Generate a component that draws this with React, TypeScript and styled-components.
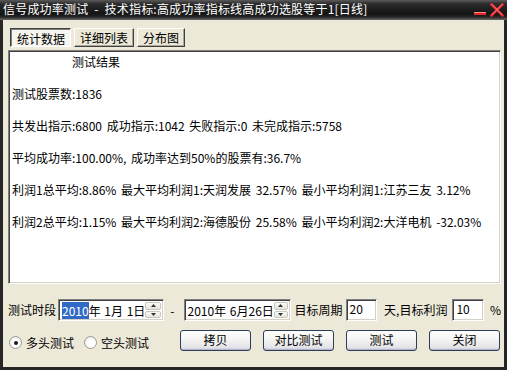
import React from "react";
import styled, { createGlobalStyle } from "styled-components";

const GlobalStyle = createGlobalStyle`
    html, body {
        margin: 0;
        padding: 0;
        background: #1c1c1c;
    }
    body {
        font-family: "Noto Sans CJK SC", "Liberation Sans", sans-serif;
        font-size: 12px;
        word-spacing: 2px;
    }
`;

const lines: (string | null)[] = [
    null,
    "测试股票数:1836",
    null,
    "共发出指示:6800 成功指示:1042 失败指示:0 未完成指示:5758",
    null,
    "平均成功率:100.00%, 成功率达到50%的股票有:36.7%",
    null,
    "利润1总平均:8.86% 最大平均利润1:天润发展 32.57% 最小平均利润1:江苏三友 3.12%",
    null,
    "利润2总平均:1.15% 最大平均利润2:海德股份 25.58% 最小平均利润2:大洋电机 -32.03%",
];

const SpinArrows = () => (
    <Spin>
        <SpinHalf>
            <svg width="5" height="3" viewBox="0 0 5 3"><path d="M2.5 0 L5 3 L0 3 Z" fill="#333" /></svg>
        </SpinHalf>
        <SpinHalf>
            <svg width="5" height="3" viewBox="0 0 5 3"><path d="M0 0 L5 0 L2.5 3 Z" fill="#333" /></svg>
        </SpinHalf>
    </Spin>
);

const App = () => {
    return (
        <>
            <GlobalStyle />
            <Window>
                <TitleBar>
                    <Title>信号成功率测试 - 技术指标:高成功率指标线高成功选股等于1[日线]</Title>
                    <WinControls>
                        <svg width="31" height="16" viewBox="0 0 31 16">
                            <rect x="0" y="11" width="12" height="3" fill="#e3242b" />
                            <rect x="0" y="11" width="12" height="1" fill="#ff8a8a" />
                            <path d="M17.5 3.5 L28.5 14.5 M28.5 3.5 L17.5 14.5" stroke="#e3242b" strokeWidth="2.6" strokeLinecap="square" />
                            <path d="M17.5 3 L28.5 14 M28.5 3 L17.5 14" stroke="#ff9a9a" strokeWidth="0.8" />
                        </svg>
                    </WinControls>
                </TitleBar>
                <Body>
                    <Tabs>
                        <Tab $active>统计数据</Tab>
                        <Tab>详细列表</Tab>
                        <Tab>分布图</Tab>
                    </Tabs>
                    <Report>
                        <Line $indent>测试结果</Line>
                        {lines.map((l, i) => (
                            <Line key={i}>{l ?? "\u00a0"}</Line>
                        ))}
                    </Report>
                    <ParamRow>
                        <Label>测试时段</Label>
                        <DateBox $w={109}>
                            <DateText>
                                <Selected>2010</Selected>年 1月 1日
                            </DateText>
                            <SpinArrows />
                        </DateBox>
                        <Dash>-</Dash>
                        <DateBox $w={107}>
                            <DateText>2010年 6月26日</DateText>
                            <SpinArrows />
                        </DateBox>
                        <Label $ml={4}>目标周期</Label>
                        <NumInput $ml={3}>20</NumInput>
                        <Label $ml={7}>天,目标利润</Label>
                        <NumInput $ml={5}>10</NumInput>
                        <Label $ml={6}>%</Label>
                    </ParamRow>
                    <ActionRow>
                        <RadioGroup>
                            <Radio>
                                <RadioDot $checked />
                                多头测试
                            </Radio>
                            <Radio>
                                <RadioDot />
                                空头测试
                            </Radio>
                        </RadioGroup>
                        <Buttons>
                            <Button>拷贝</Button>
                            <Button>对比测试</Button>
                            <Button>测试</Button>
                            <Button>关闭</Button>
                        </Buttons>
                    </ActionRow>
                </Body>
            </Window>
        </>
    );
};

export default App;

const Window = styled.div`
    width: 507px;
    height: 370px;
    display: flex;
    flex-direction: column;
    background: #262626;
    box-sizing: border-box;
    overflow: hidden;
`;

const TitleBar = styled.div`
    height: 20px;
    flex-shrink: 0;
    display: flex;
    align-items: flex-start;
    justify-content: space-between;
    background: linear-gradient(to bottom, #5a5a5a 0%, #2a2a2a 20%, #141414 70%, #262626 85%, #6a6a6a 100%);
`;

const Title = styled.div`
    color: #fff;
    font-size: 12px;
    line-height: 18px;
    padding-left: 3px;
    letter-spacing: 0.2px;
    word-spacing: 3px;
    white-space: nowrap;
`;

const WinControls = styled.div`
    padding-right: 2px;
    padding-top: 1px;
    display: flex;
`;

const Body = styled.div`
    flex: 1;
    margin: 0 3px 3px 3px;
    background: #ece9d8;
    padding: 8px 3px 0 5px;
    display: flex;
    flex-direction: column;
`;

const Tabs = styled.div`
    display: flex;
    gap: 3px;
    margin-left: 2px;
    height: 19px;
`;

const Tab = styled.div<{ $active?: boolean }>`
    box-sizing: border-box;
    height: 19px;
    padding: 0 5px;
    display: flex;
    align-items: center;
    color: #000;
    font-size: 12px;
    background: ${(p) => (p.$active ? "#f6f5f0" : "#ece9d8")};
    border-style: solid;
    border-width: 1px;
    border-color: ${(p) => (p.$active ? "#404040 #ffffff #ffffff #404040" : "#ffffff #404040 #404040 #ffffff")};
    box-shadow: ${(p) => (p.$active ? "inset 1px 1px 0 #808080" : "inset -1px -1px 0 #aca899")};
    padding-top: ${(p) => (p.$active ? "2px" : "0")};
    padding-left: ${(p) => (p.$active ? "6px" : "5px")};
`;

const Report = styled.div`
    margin-top: 3px;
    height: 234px;
    box-sizing: border-box;
    background: #fff;
    border-style: solid;
    border-width: 1px;
    border-color: #808080 #ffffff #ffffff #808080;
    box-shadow: inset 1px 1px 0 #404040, inset -1px -1px 0 #d4d0c8;
    padding: 3px 2px 0 2px;
    overflow: hidden;
`;

const Line = styled.div<{ $indent?: boolean }>`
    height: 16px;
    line-height: 16px;
    white-space: nowrap;
    color: #000;
    padding-left: ${(p) => (p.$indent ? "61px" : "1px")};
`;

const ParamRow = styled.div`
    margin-top: 15px;
    height: 22px;
    display: flex;
    align-items: center;
`;

const Label = styled.span<{ $ml?: number }>`
    margin-left: ${(p) => p.$ml ?? 0}px;
    white-space: nowrap;
    color: #000;
    line-height: 22px;
`;

const DateBox = styled.div<{ $w: number }>`
    width: ${(p) => p.$w}px;
    height: 22px;
    margin-left: 2px;
    box-sizing: border-box;
    background: #fff;
    border-style: solid;
    border-width: 1px;
    border-color: #808080 #ffffff #ffffff #808080;
    box-shadow: inset 1px 1px 0 #404040, inset -1px -1px 0 #d4d0c8;
    display: flex;
    align-items: stretch;
    padding: 2px 2px 2px 3px;
`;

const DateText = styled.div`
    flex: 1;
    line-height: 18px;
    white-space: nowrap;
    word-spacing: 1px;
    color: #000;
`;

const Selected = styled.span`
    background: #316ac5;
    color: #fff;
`;

const Spin = styled.div`
    width: 16px;
    display: flex;
    flex-direction: column;
    gap: 1px;
`;

const SpinHalf = styled.div`
    flex: 1;
    display: flex;
    align-items: center;
    justify-content: center;
    background: linear-gradient(#fbfbf9, #e6e4dc);
    border: 1px solid #c9c6ba;
    border-radius: 2px;
`;

const Dash = styled.span`
    margin: 0 7px 0 6px;
    color: #000;
`;

const NumInput = styled.div<{ $ml?: number }>`
    margin-left: ${(p) => p.$ml ?? 0}px;
    width: 33px;
    height: 22px;
    box-sizing: border-box;
    background: #fff;
    border-style: solid;
    border-width: 1px;
    border-color: #808080 #ffffff #ffffff #808080;
    box-shadow: inset 1px 1px 0 #404040, inset -1px -1px 0 #d4d0c8;
    padding: 1px 0 0 3px;
    line-height: 16px;
    color: #000;
`;

const ActionRow = styled.div`
    margin-top: 9px;
    display: flex;
    align-items: center;
    height: 21px;
`;

const RadioGroup = styled.div`
    display: flex;
    gap: 9px;
    width: 172px;
    margin-top: 4px;
`;

const Radio = styled.label`
    display: flex;
    align-items: center;
    gap: 4px;
    margin-left: 1px;
    color: #000;
    white-space: nowrap;
`;

const RadioDot = styled.span<{ $checked?: boolean }>`
    width: 11px;
    height: 11px;
    border-radius: 50%;
    border: 1px solid #9c9a92;
    background: radial-gradient(circle at 60% 60%, #ffffff 40%, #e2e0d6 100%);
    position: relative;
    &::after {
        content: "";
        display: ${(p) => (p.$checked ? "block" : "none")};
        position: absolute;
        left: 4px;
        top: 4px;
        width: 4px;
        height: 4px;
        border-radius: 50%;
        background: #1a1a1a;
    }
`;

const Buttons = styled.div`
    display: flex;
    gap: 12px;
`;

const Button = styled.div`
    width: 71px;
    height: 21px;
    box-sizing: border-box;
    border: 1px solid #2b3d5a;
    border-radius: 3px;
    background: linear-gradient(to bottom, #ffffff 0%, #f4f4f2 45%, #e4e4ea 85%, #c9c9d4 100%);
    box-shadow: inset 0 -1px 0 #b8b8c4;
    display: flex;
    align-items: center;
    justify-content: center;
    color: #000;
    padding-bottom: 2px;
`;
